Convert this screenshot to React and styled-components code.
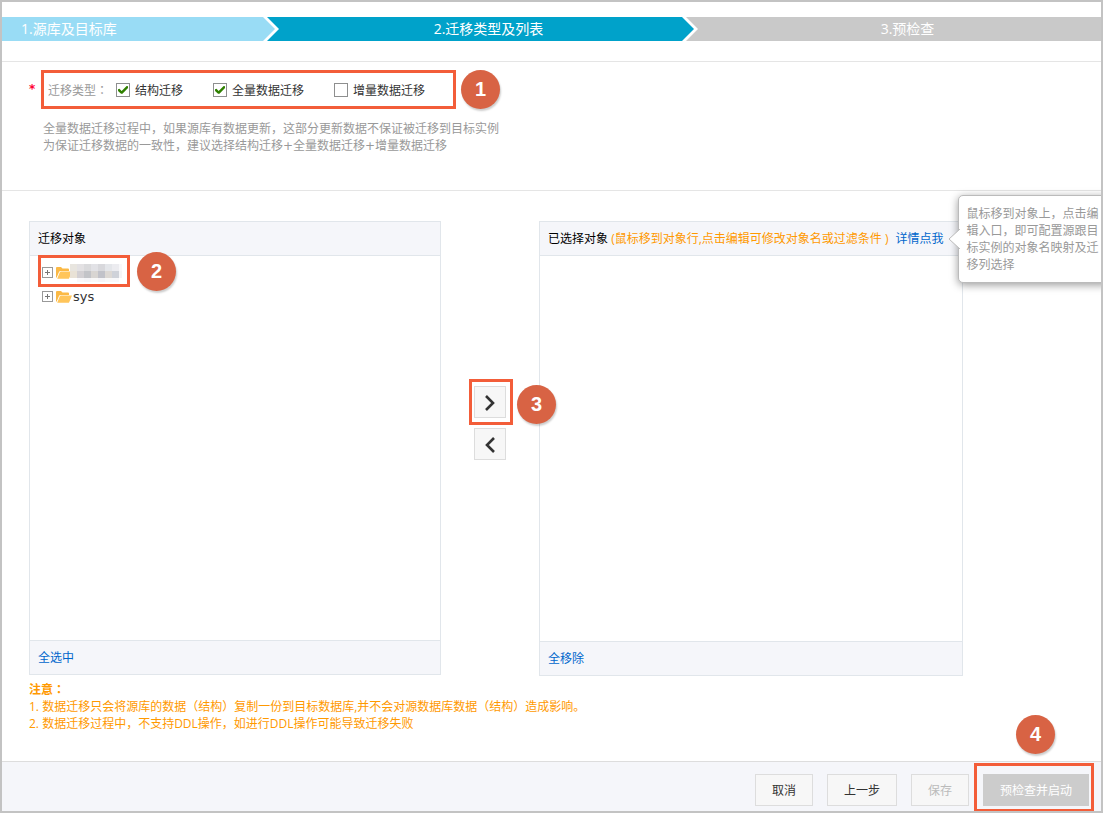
import React from 'react'
import styled, { createGlobalStyle, css } from 'styled-components'

const GlobalStyle = createGlobalStyle`
    * {
        box-sizing: border-box;
    }
    body {
        margin: 0;
        font-family: "Open Sans", "Noto Sans CJK SC", sans-serif;
        font-size: 12px;
        line-height: 17px;
        color: #333333;
        background: #ffffff;
    }
    button, input {
        font: inherit;
    }
`

const Page = styled.div`
    display: flex;
    flex-direction: column;
    min-height: 100vh;
    padding-top: 15px;
    border: 2px solid #c3c3c3;
    overflow: hidden;
`

// Step bar

const Steps = styled.ol`
    display: grid;
    grid-template-columns: 277fr 419fr 403fr;
    margin: 0;
    padding: 0;
    list-style: none;
    font-size: 14px;
    line-height: 24px;
    color: #ffffff;
`
const Step = styled.li`
    display: flex;
    height: 24px;
    background: ${({ $color }) => $color};
`
const StepLabel = styled.span`
    flex: 1;
    padding-left: ${({ $indent }) => $indent || 0}px;
    text-align: ${({ $align }) => $align || 'center'};
`
const StepArrow = ({ from, to }) => (
    <svg width="16" height="24" viewBox="0 0 16 24" aria-hidden="true">
        <rect width="16" height="24" fill={to} />
        <path d="M0 0H4L16 12L4 24H0Z" fill="#ffffff" />
        <path d="M0 0L12 12L0 24Z" fill={from} />
    </svg>
)

// Red frames and numbered badges

const frame = css`
    border: 3px solid #f35d39;
`
const Marked = styled.div`
    position: relative;
    &::after {
        content: "";
        position: absolute;
        inset: ${({ $inset }) => $inset};
        pointer-events: none;
        ${frame}
    }
`
const Badge = styled.span`
    flex: none;
    width: 39px;
    height: 39px;
    border-radius: 50%;
    background: #d86344;
    box-shadow: 1px 2px 2px rgba(0, 0, 0, 0.2);
    color: #ffffff;
    font: bold 20px/39px "Liberation Sans", sans-serif;
    text-align: center;
`
const FloatingBadge = styled(Badge)`
    position: absolute;
    z-index: 1;
    left: ${({ $left }) => $left};
    top: ${({ $top }) => $top};
`

// Migration type

const TypeSection = styled.section`
    height: 130px;
    margin-top: 20px;
    padding: 8px 27px 0;
    border-top: 1px solid #e5e5e5;
    border-bottom: 1px solid #e5e5e5;
`
const TypeRow = styled.div`
    display: flex;
    align-items: center;
`
const Required = styled.span`
    width: 12px;
    font-family: "DejaVu Sans", sans-serif;
    font-weight: bold;
    color: #ff0033;
`
const TypeBox = styled.fieldset`
    display: flex;
    align-items: center;
    width: 415px;
    height: 39px;
    margin: 0 5px 0 0;
    padding: 1px 4px 0;
    white-space: nowrap;
    ${frame}
`
const TypeTitle = styled.span`
    margin-right: 8px;
    color: #999999;
`
const Colon = styled.span`
    font-family: "Noto Sans CJK JP", sans-serif;
    line-height: 1;
`
const Option = styled.label`
    display: flex;
    align-items: center;
    gap: 5px;
    margin-right: 30px;
    &:last-child {
        margin-right: 0;
    }
`
const Checkbox = styled.input`
    appearance: none;
    display: grid;
    place-items: center;
    flex: none;
    width: 14px;
    height: 14px;
    margin: 0;
    border: 1px solid #8e8f8f;
    background: #ffffff;
    &:checked::after {
        content: "";
        width: 10px;
        height: 8px;
        background: #2f8000;
        clip-path: polygon(0 40%, 14% 34%, 36% 62%, 86% 0, 100% 4%, 100% 24%, 44% 98%, 30% 98%, 0 62%);
    }
`
const Hint = styled.p`
    margin: 12px 0 0 14px;
    font-family: "DejaVu Sans", "Noto Sans CJK SC", sans-serif;
    color: #999999;
`

// Object panels

const Transfer = styled.main`
    display: grid;
    grid-template-columns: 412fr 98px 424fr;
    align-items: start;
    padding: 30px 138px 0 27px;
`
const Panel = styled.section`
    display: flex;
    flex-direction: column;
    border: 1px solid #e1e6eb;
`
const PanelHeader = styled.header`
    height: 34px;
    padding-left: 8px;
    border-bottom: 1px solid #e1e6eb;
    background: #f5f6fa;
    line-height: 34px;
    color: #000000;
    white-space: nowrap;
`
const PanelBody = styled.div`
    height: ${({ $height }) => $height}px;
    padding: 4px 12px;
`
const PanelFooter = styled.footer`
    height: 34px;
    padding-left: 8px;
    border-top: 1px solid #e1e6eb;
    background: #f5f6fa;
    line-height: 34px;
`
const Link = styled.a`
    color: #0066cc;
    text-decoration: none;
`
const Tip = styled.span`
    margin-right: 4px;
    color: #ff9900;
`
const TreeRow = styled.div`
    display: flex;
    align-items: center;
    height: 24px;
`
const NodeName = styled.span`
    margin-left: 1px;
    font-family: "DejaVu Sans", sans-serif;
    font-size: 13px;
`
const Mosaic = styled.svg`
    align-self: flex-end;
    margin-left: -2px;
`
const NodeMark = styled(Marked)`
    width: 80px;
`
const Expand = styled.button`
    display: flex;
    width: 11px;
    height: 11px;
    margin-right: 3px;
    padding: 0;
    border: 0;
    background: none;
`
const MoveColumn = styled.div`
    display: flex;
    flex-direction: column;
    align-items: center;
    gap: 10px;
    padding-top: 165px;
`
const MoveButton = styled.button`
    display: grid;
    place-items: center;
    width: 32px;
    height: 32px;
    padding: 2px 0 0;
    border: 1px solid #dddddd;
    background: #f7f7f7;
`
const Help = styled.span`
    position: relative;
`
const Tooltip = styled.span`
    position: absolute;
    left: calc(100% + 14px);
    top: -35px;
    width: 152px;
    height: 88px;
    padding: 9px 0 0 8px;
    border: 1px solid #bbbbbb;
    border-radius: 5px;
    background: #ffffff;
    box-shadow: 0 2px 8px rgba(0, 0, 0, 0.4);
    line-height: 17px;
    color: #999999;
    white-space: normal;
    svg {
        position: absolute;
        left: -11px;
        top: 33px;
    }
`
const Notes = styled.div`
    padding: 5px 27px 29px;
    color: #ff9900;
`
const NoteList = styled.ol`
    margin: 0;
    padding: 0;
    list-style-position: inside;
`

// Bottom actions

const Actions = styled.footer`
    display: flex;
    flex: 1;
    justify-content: flex-end;
    align-items: flex-start;
    gap: 14px;
    padding: 12px 12px 5px;
    border-top: 1px solid #dddddd;
    background: #f5f6fa;
`
const Button = styled.button`
    height: 32px;
    padding: 0 16px;
    border: 1px solid #dddddd;
    background: #f7f7f7;
    color: #333333;
    &:disabled {
        color: #bbbbbb;
    }
`
const PrimaryButton = styled(Button)`
    border-color: #cccccc;
    background: #cccccc;
    &:disabled {
        color: #ffffff;
    }
`

const PlusIcon = () => (
    <svg width="11" height="11" viewBox="0 0 11 11" shapeRendering="crispEdges">
        <rect x="0.5" y="0.5" width="10" height="10" fill="#ffffff" stroke="#999999" />
        <path d="M3 5.5H8M5.5 3V8" stroke="#777777" />
    </svg>
)

const FolderIcon = () => (
    <svg width="16" height="13" viewBox="0 0 16 13">
        <path d="M0 11V2Q0 1 1 1H5L6.5 2.5H12Q13 2.5 13 3.5V5H4.5Q3.5 5 3 6L0.5 12Z" fill="#fbb945" />
        <path d="M1.2 12.8L3.8 6.3Q4.2 5.5 5 5.5H16L13.3 11.9Q13 12.8 12 12.8Z" fill="#ffc55a" />
    </svg>
)

const ChevronIcon = ({ d }) => (
    <svg width="10" height="16" viewBox="0 0 10 16">
        <path d={d} fill="none" stroke="#333333" strokeWidth="2.6" />
    </svg>
)

// Pixelated database name, 7px per cell
const MOSAIC = [
    ['#e8e5df', '#e3e1e3', '#dadadc', '#e2e2e6', '#d8d8dc', '#e4e6ea', '#ececf0', '#f8f8fa'],
    ['#e9e2d6', '#d3d0d3', '#c3c4c8', '#d8d5d2', '#c1c2c9', '#dcd8d4', '#cfd2d9', '#f5f5f7'],
    ['#ffffff', '#f8f8fa', '#f5f5f8', '#f8f8f8', '#f4f4f7', '#f8f8f8', '#f8f8fa', '#ffffff'],
]
const MaskedName = () => (
    <Mosaic width="52" height="20" viewBox="0 0 52 20" role="img" aria-label="database">
        {MOSAIC.map((row, y) =>
            row.map((fill, x) => (
                <rect key={`${x}-${y}`} x={x * 7} y={y * 7} width="7" height={y === 2 ? 4 : 7} fill={fill} />
            ))
        )}
    </Mosaic>
)

const App = () => {
    return (
        <Page>
            <GlobalStyle />
            <Steps>
                <Step $color="#99dcf5">
                    <StepLabel $align="left" $indent={19}>1.源库及目标库</StepLabel>
                    <StepArrow from="#99dcf5" to="#00a2ca" />
                </Step>
                <Step $color="#00a2ca">
                    <StepLabel $indent={16}>2.迁移类型及列表</StepLabel>
                    <StepArrow from="#00a2ca" to="#c9c9c9" />
                </Step>
                <Step $color="#c9c9c9">
                    <StepLabel $indent={16}>3.预检查</StepLabel>
                </Step>
            </Steps>

            <TypeSection>
                <TypeRow>
                    <Required>*</Required>
                    <TypeBox aria-label="迁移类型">
                        <TypeTitle>迁移类型<Colon lang="ja">：</Colon></TypeTitle>
                        <Option><Checkbox type="checkbox" defaultChecked />结构迁移</Option>
                        <Option><Checkbox type="checkbox" defaultChecked />全量数据迁移</Option>
                        <Option><Checkbox type="checkbox" />增量数据迁移</Option>
                    </TypeBox>
                    <Badge>1</Badge>
                </TypeRow>
                <Hint>
                    全量数据迁移过程中，如果源库有数据更新，这部分更新数据不保证被迁移到目标实例<br />
                    为保证迁移数据的一致性，建议选择结构迁移+全量数据迁移+增量数据迁移
                </Hint>
            </TypeSection>

            <Transfer>
                <Panel>
                    <PanelHeader>迁移对象</PanelHeader>
                    <PanelBody $height={384}>
                        <NodeMark $inset="-5px -8px -3px -4px">
                            <TreeRow>
                                <Expand aria-label="展开"><PlusIcon /></Expand>
                                <FolderIcon />
                                <MaskedName />
                            </TreeRow>
                            <FloatingBadge $left="95px" $top="-8px">2</FloatingBadge>
                        </NodeMark>
                        <TreeRow>
                            <Expand aria-label="展开"><PlusIcon /></Expand>
                            <FolderIcon />
                            <NodeName>sys</NodeName>
                        </TreeRow>
                    </PanelBody>
                    <PanelFooter><Link href="#all">全选中</Link></PanelFooter>
                </Panel>

                <MoveColumn>
                    <Marked $inset="-7px -7px -7px -5px">
                        <MoveButton aria-label="添加">
                            <ChevronIcon d="M1 1L8 8L1 15" />
                        </MoveButton>
                        <FloatingBadge $left="43px" $top="-1px">3</FloatingBadge>
                    </Marked>
                    <MoveButton aria-label="移除">
                        <ChevronIcon d="M9 1L2 8L9 15" />
                    </MoveButton>
                </MoveColumn>

                <Panel>
                    <PanelHeader>
                        已选择对象 <Tip>(鼠标移到对象行,点击编辑可修改对象名或过滤条件 ) </Tip>
                        <Help>
                            <Link href="#detail">详情点我</Link>
                            <Tooltip role="tooltip">
                                <svg width="12" height="20" viewBox="0 0 12 20">
                                    <path d="M12 0L1 10L12 20" fill="#ffffff" stroke="#bbbbbb" />
                                </svg>
                                鼠标移到对象上，点击编辑入口，即可配置源跟目标实例的对象名映射及迁移列选择
                            </Tooltip>
                        </Help>
                    </PanelHeader>
                    <PanelBody $height={385} />
                    <PanelFooter><Link href="#none">全移除</Link></PanelFooter>
                </Panel>
            </Transfer>

            <Notes>
                <strong>注意<Colon lang="ja">：</Colon></strong>
                <NoteList>
                    <li>数据迁移只会将源库的数据（结构）复制一份到目标数据库,并不会对源数据库数据（结构）造成影响。</li>
                    <li>数据迁移过程中，不支持DDL操作，如进行DDL操作可能导致迁移失败</li>
                </NoteList>
            </Notes>

            <Actions>
                <Button>取消</Button>
                <Button>上一步</Button>
                <Button disabled>保存</Button>
                <Marked $inset="-11px -5px -6px -9px">
                    <PrimaryButton disabled>预检查并启动</PrimaryButton>
                    <FloatingBadge $left="33px" $top="-59px">4</FloatingBadge>
                </Marked>
            </Actions>
        </Page>
    )
}

export default App
